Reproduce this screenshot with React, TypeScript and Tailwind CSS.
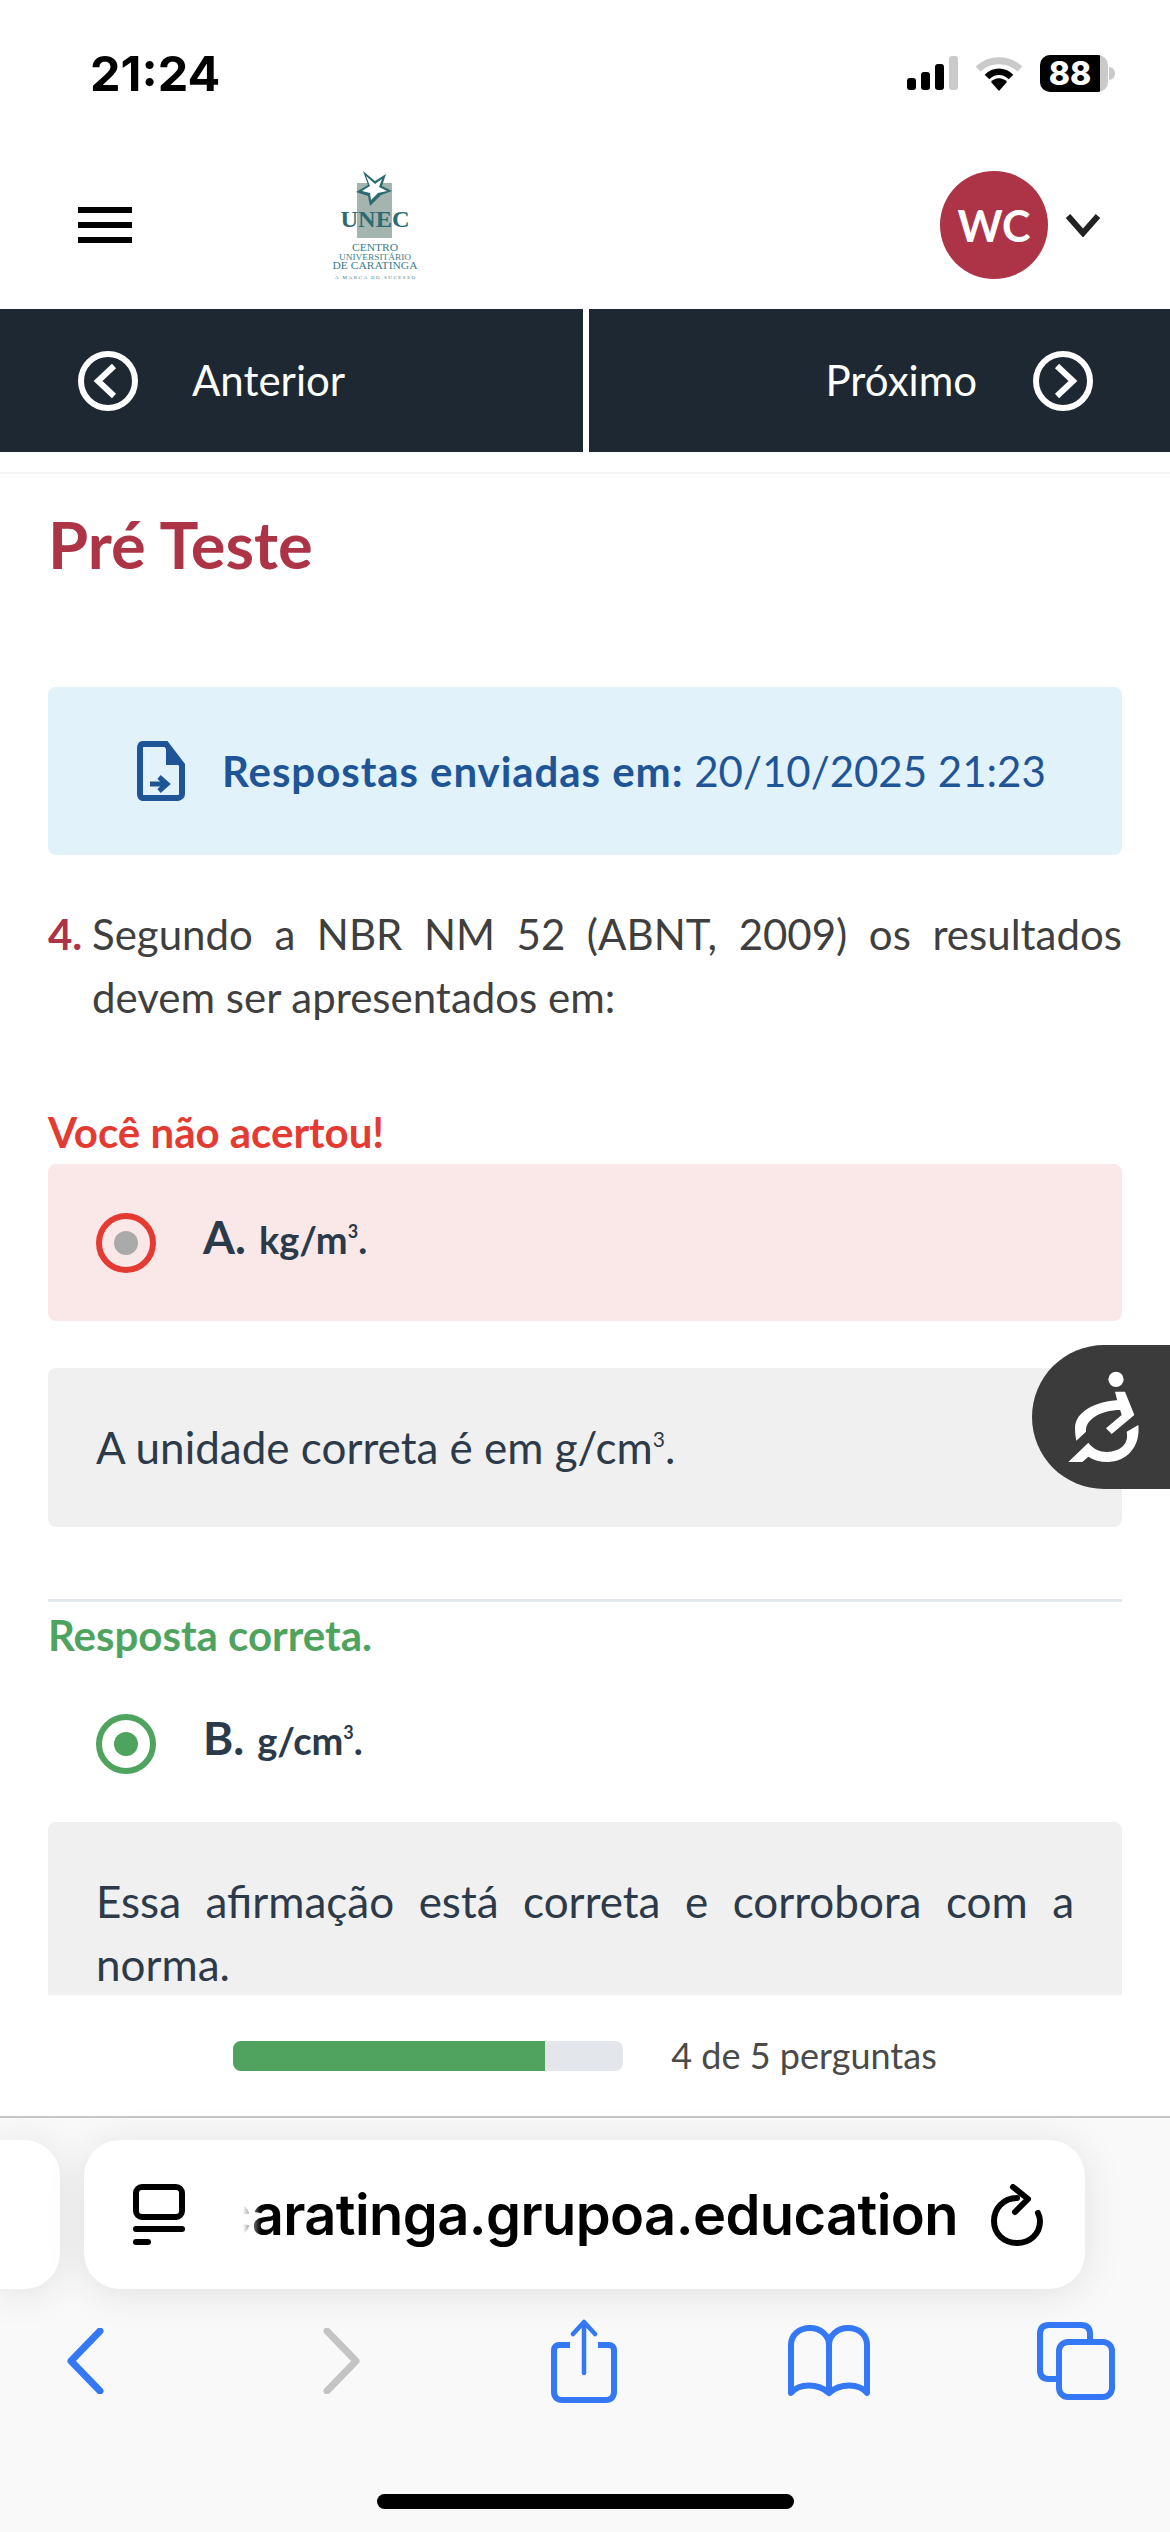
function StatusIcons() {
  return (
    <div className="flex items-center">
      <svg width="52" height="36" viewBox="0 0 52 36" className="block">
        <rect x="1" y="22" width="9" height="12" rx="3" fill="#000" />
        <rect x="15" y="16" width="9" height="18" rx="3" fill="#000" />
        <rect x="29" y="8" width="9" height="26" rx="3" fill="#000" />
        <rect x="43" y="0" width="9" height="34" rx="3" fill="#cacaca" />
      </svg>
      <svg width="48" height="36" viewBox="0 0 48 36" className="ml-[17px] block">
        <path d="M3 13C15 2 33 2 45 13" fill="none" stroke="#cacaca" strokeWidth="7" strokeLinecap="butt" />
        <path d="M12 21C19 14 29 14 36 21" fill="none" stroke="#000" strokeWidth="6.5" />
        <path d="M16 26C20 21 28 21 32 26L24 35Z" fill="#000" />
      </svg>
      <div className="relative ml-[17px] flex h-[37px] w-[68px] items-center overflow-hidden rounded-[10px] bg-[#cacaca]">
        <div className="flex h-full w-[60px] items-center justify-center bg-black font-['Inter',sans-serif] text-[32px] leading-none font-extrabold text-white">
          88
        </div>
      </div>
      <div className="ml-[1px] h-[13px] w-[6px] rounded-r-full bg-[#cacaca]" />
    </div>
  );
}

function Logo() {
  return (
    <svg width="90" height="112" viewBox="0 0 90 112" className="block">
      <rect x="27" y="14" width="35" height="55" fill="#a3b5ae" />
      <path d="M33 2L45 12L56 5L52 17L62 22L51 26L40 37L38 27L26 23L38 16Z" fill="#2d6b73" />
      <path d="M36 7L45 15L52 10L49 18L57 22L48 24L41 31L40 24L32 22L40 17Z" fill="#fff" />
      <text x="45" y="58" textAnchor="middle" textLength="69" lengthAdjust="spacingAndGlyphs" fontFamily="'Liberation Serif', serif" fontWeight="700" fontSize="24" fill="#2d6b73">UNEC</text>
      <text x="45" y="82" textAnchor="middle" textLength="46" lengthAdjust="spacingAndGlyphs" fontFamily="'Liberation Serif', serif" fontSize="10" fill="#40808a">CENTRO</text>
      <text x="45" y="91" textAnchor="middle" textLength="72" lengthAdjust="spacingAndGlyphs" fontFamily="'Liberation Serif', serif" fontSize="9" fill="#40808a">UNIVERSITÁRIO</text>
      <text x="45" y="100" textAnchor="middle" textLength="85" lengthAdjust="spacingAndGlyphs" fontFamily="'Liberation Serif', serif" fontSize="10" fill="#40808a">DE CARATINGA</text>
      <text x="45" y="110" textAnchor="middle" textLength="80" lengthAdjust="spacing" fontFamily="'Liberation Serif', serif" fontSize="5" fill="#40808a">A MARCA DO SUCESSO</text>
    </svg>
  );
}

function CircleArrow({ dir }: { dir: "left" | "right" }) {
  return (
    <svg width="60" height="60" viewBox="0 0 60 60" className="block shrink-0">
      <circle cx="30" cy="30" r="27" fill="none" stroke="#fff" strokeWidth="6" />
      <path
        d={dir === "left" ? "M36 15L20 30L36 45" : "M24 15L40 30L24 45"}
        fill="none"
        stroke="#fff"
        strokeWidth="6"
      />
    </svg>
  );
}

function Radio({ ring, dot }: { ring: string; dot: string }) {
  return (
    <svg width="60" height="60" viewBox="0 0 60 60" className="block shrink-0">
      <circle cx="30" cy="30" r="27" fill="none" stroke={ring} strokeWidth="6" />
      <circle cx="30" cy="30" r="12" fill={dot} />
    </svg>
  );
}

function AccessIcon() {
  return (
    <svg width="138" height="144" viewBox="36 45 414 432" className="block">
      <circle cx="288" cy="148" r="23" fill="#fff" />
      <path d="M285 185H315L343 255L275 312L258 295L305 255L292 212Z" fill="#fff" />
      <path d="M295 210C225 215 165 245 165 295C165 310 167 322 169 332L198 305C195 270 240 240 302 240Z" fill="#fff" />
      <path d="M355 285C362 350 320 396 262 396C240 396 220 390 205 380L187 396H145L205 338C225 365 260 372 290 360C315 350 325 330 320 305Z" fill="#fff" />
    </svg>
  );
}

export default function App() {
  return (
    <div className="flex h-[2532px] w-[1170px] flex-col overflow-hidden bg-white font-['Lato',sans-serif] text-[42px] leading-[63px]">
      {/* status bar */}
      <div className="flex h-[141px] shrink-0 items-start justify-between pt-[55px] pr-[55px] pl-[90px]">
        <span className="font-['Inter',sans-serif] text-[48.5px] leading-[37px] font-bold text-black">21:24</span>
        <StatusIcons />
      </div>

      {/* header */}
      <div className="flex h-[168px] shrink-0 items-center pr-[69px] pl-[78px]">
        <div className="flex h-[36px] w-[54px] flex-col justify-between">
          <div className="h-[6px] bg-black" />
          <div className="h-[6px] bg-black" />
          <div className="h-[6px] bg-black" />
        </div>
        <div className="ml-[198px]">
          <Logo />
        </div>
        <div className="ml-auto flex h-[108px] w-[108px] items-center justify-center rounded-full bg-[#ad3446] text-[43px] font-bold text-white">
          WC
        </div>
        <svg width="36" height="24" viewBox="0 0 36 24" className="ml-[17px] block">
          <path d="M3 3L18 20L33 3" fill="none" stroke="#222" strokeWidth="6" />
        </svg>
      </div>

      {/* anterior / proximo */}
      <div className="flex h-[143px] shrink-0 gap-[6px] text-[42px] text-white">
        <div className="flex flex-1 items-center gap-[54px] bg-[#1e2832] pl-[78px]">
          <CircleArrow dir="left" />
          <span>Anterior</span>
        </div>
        <div className="flex flex-1 items-center justify-end gap-[56px] bg-[#1e2832] pr-[77px]">
          <span>Próximo</span>
          <CircleArrow dir="right" />
        </div>
      </div>
      <div className="h-[22px] shrink-0 border-b-2 border-[#f5f5f5]" />

      {/* content */}
      <div className="relative flex-1 overflow-hidden px-[48px]">
        <h1 className="pt-[30px] text-[65px] leading-[80px] font-bold text-[#ad3446]">Pré Teste</h1>

        <div className="mt-[103px] flex h-[168px] items-center rounded-[8px] bg-[#e1f2fb] pl-[89px] text-[#1f5596]">
          <svg width="48" height="60" viewBox="0 0 48 60" className="block shrink-0">
            <path d="M5 3H29L45 24V53C45 55 43 57 41 57H5C4 57 3 55 3 53V7C3 5 4 3 5 3Z" fill="none" stroke="#1f5596" strokeWidth="6" />
            <path d="M29 3L45 24H29Z" fill="#1f5596" />
            <path d="M13 43H27M22 36L30 43L22 50" fill="none" stroke="#1f5596" strokeWidth="5" />
          </svg>
          <p className="ml-[37px]">
            <span className="font-bold tracking-[0.95px]">Respostas enviadas em:</span> 20/10/2025 21:23
          </p>
        </div>

        <div className="mt-[48px] flex text-[#3f3f3f]">
          <span className="w-[44px] shrink-0 font-bold text-[#ad3446]">4.</span>
          <p className="flex-1 text-justify">Segundo a NBR NM 52 (ABNT, 2009) os resultados devem ser apresentados em:</p>
        </div>

        <p className="mt-[72px] font-bold text-[#e53a32]">Você não acertou!</p>
        <div className="flex h-[157px] items-center gap-[47px] rounded-[8px] bg-[#fae8e9] pl-[48px] text-[#2b3a4a]">
          <Radio ring="#e53a32" dot="#aaaaaa" />
          <p className="-mt-[10px] flex items-baseline gap-[13px] text-[38px] font-bold">
            <span className="text-[46px]">A.</span>
            <span>
              kg/m<sup className="top-[-16px] text-[18px]">3</sup>.
            </span>
          </p>
        </div>

        <div className="mt-[47px] flex h-[159px] items-center rounded-[8px] bg-[#f0f0f0] px-[48px] text-[44px] text-[#2d3a4a]">
          <span>
            A unidade correta é em g/cm<sup className="top-[-17px] text-[21px]">3</sup>.
          </span>
        </div>

        <div className="mt-[72px] h-[3px] bg-[#e3e8ec]" />
        <p className="mt-[2px] font-bold text-[#4ea45f]">Resposta correta.</p>

        <div className="mt-[47px] flex items-center gap-[47px] pl-[48px] text-[#2b3a4a]">
          <Radio ring="#4ea45f" dot="#4ea45f" />
          <p className="-mt-[10px] flex items-baseline gap-[13px] text-[38px] font-bold">
            <span className="text-[46px]">B.</span>
            <span>
              g/cm<sup className="top-[-16px] text-[18px]">3</sup>.
            </span>
          </p>
        </div>

        <div className="mt-[48px] rounded-[8px] bg-[#f0f0f0] px-[48px] py-[48px] text-justify text-[44px] text-[#2d3a4a]">
          Essa afirmação está correta e corrobora com a norma.
        </div>
      </div>

      {/* progress */}
      <div className="flex h-[121px] shrink-0 items-start justify-center bg-white pt-[46px] text-[36px] leading-[28px] text-[#4a4a4a]">
        <div className="h-[30px] w-[390px] overflow-hidden rounded-[8px] bg-[#e3e6ea]">
          <div className="h-full bg-[#4fa35f]" style={{ width: "80%" }} />
        </div>
        <span className="ml-[48px]">4 de 5 perguntas</span>
      </div>

      {/* safari */}
      <div className="relative flex h-[416px] shrink-0 flex-col border-t-2 border-[#c6c6c6] bg-[#f9f9f9]">
        <div className="mt-[22px] flex h-[149px] gap-[24px]">
          <div className="h-full w-[60px] rounded-r-[36px] bg-white shadow-[0_4px_40px_rgba(0,0,0,0.1)]" />
          <div className="flex h-full w-[1001px] items-center overflow-hidden rounded-[36px] bg-white pr-[40px] pl-[49px] font-['Inter',sans-serif] text-black shadow-[0_4px_40px_rgba(0,0,0,0.1)]">
            <svg width="52" height="62" viewBox="0 0 52 62" className="block shrink-0">
              <rect x="3" y="3" width="46" height="30" rx="6" fill="none" stroke="#000" strokeWidth="6" />
              <path d="M3 45H49M3 58H15" fill="none" stroke="#000" strokeWidth="6" strokeLinecap="round" />
            </svg>
            <div className="relative ml-[58px] flex w-[715px] justify-end overflow-hidden">
              <span className="shrink-0 text-[56px] leading-[70px] font-semibold tracking-[-0.6px] whitespace-nowrap">
                caratinga.grupoa.education
              </span>
              <div className="absolute inset-y-0 left-0 w-[18px] bg-gradient-to-r from-white to-transparent" />
            </div>
            <svg width="54" height="62" viewBox="0 0 54 62" className="ml-auto block shrink-0">
              <path d="M26 14C12 14 3 25 3 37C3 50 13 59 26 59C39 59 49 50 49 37C49 34 48 31 47 29" fill="none" stroke="#000" strokeWidth="6" strokeLinecap="round" />
              <path d="M22 3L37 15L24 28" fill="none" stroke="#000" strokeWidth="6" strokeLinecap="round" strokeLinejoin="round" />
            </svg>
          </div>
        </div>

        <div className="mt-[30px] flex h-[84px] items-center pl-[66px]">
          <svg width="40" height="66" viewBox="0 0 40 66" className="block shrink-0">
            <path d="M34 3L5 33L34 63" fill="none" stroke="#3478f6" strokeWidth="7" strokeLinecap="round" strokeLinejoin="round" />
          </svg>
          <svg width="40" height="66" viewBox="0 0 40 66" className="ml-[215px] block shrink-0">
            <path d="M6 3L35 33L6 63" fill="none" stroke="#c4c4c4" strokeWidth="7" strokeLinecap="round" strokeLinejoin="round" />
          </svg>
          <svg width="66" height="84" viewBox="0 0 66 84" className="ml-[190px] block shrink-0">
            <path d="M19 26H8C5 26 3 28 3 31V73C3 78 6 81 11 81H55C60 81 63 78 63 73V31C63 28 61 26 58 26H47" fill="none" stroke="#3478f6" strokeWidth="6" />
            <path d="M33 54V3M22 15L33 3L44 15" fill="none" stroke="#3478f6" strokeWidth="4.5" strokeLinecap="round" strokeLinejoin="round" />
          </svg>
          <svg width="82" height="72" viewBox="0 0 82 72" className="ml-[171px] block shrink-0">
            <path d="M41 20C41 10 32 3 22 3C11 3 3 10 3 20V68C11 58 30 58 41 68C52 58 71 58 79 68V20C79 10 71 3 60 3C50 3 41 10 41 20V66" fill="none" stroke="#3478f6" strokeWidth="6" strokeLinejoin="round" />
          </svg>
          <svg width="78" height="78" viewBox="0 0 78 78" className="ml-[167px] block shrink-0">
            <path d="M19 57H12C6 57 3 54 3 48V12C3 6 6 3 12 3H44C50 3 53 6 53 12V19" fill="none" stroke="#3478f6" strokeWidth="6" />
            <rect x="22" y="20" width="53" height="55" rx="9" fill="none" stroke="#3478f6" strokeWidth="6" />
          </svg>
        </div>

        <div className="mx-auto mt-[91px] h-[15px] w-[417px] rounded-full bg-black" />
      </div>

      {/* accessibility button */}
      <div className="absolute top-[1345px] left-[1032px] h-[144px] w-[138px] rounded-l-[72px] bg-[#3b3b3b]">
        <AccessIcon />
      </div>
    </div>
  );
}
